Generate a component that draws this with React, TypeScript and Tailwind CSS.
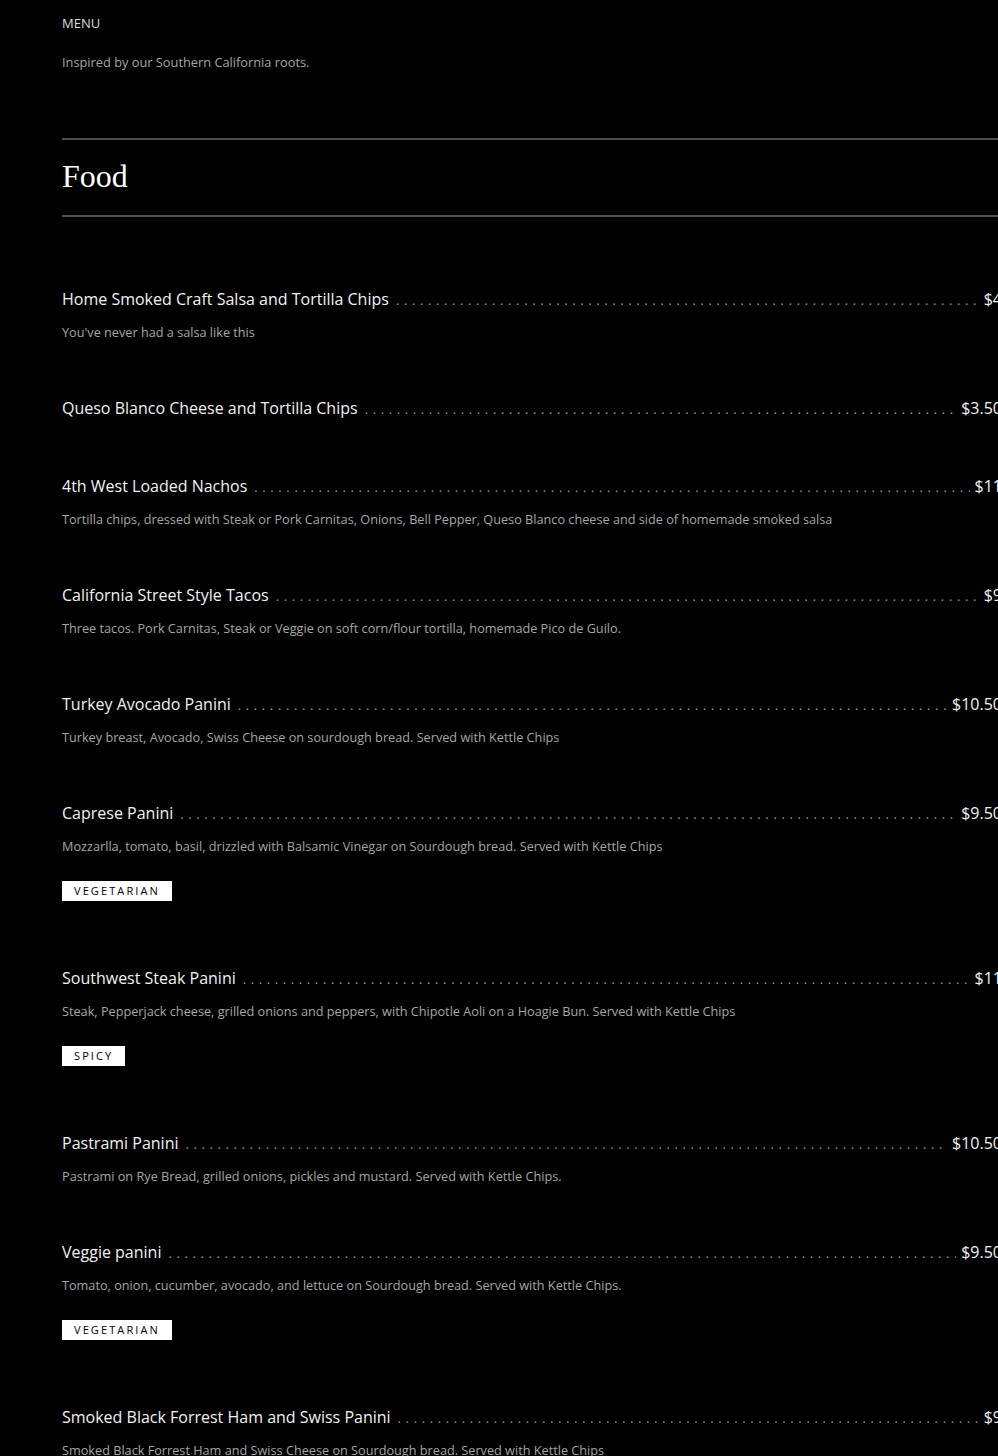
import React from "react";

type Item = {
  name: string;
  price: string;
  desc?: string;
  tag?: string;
};

const items: Item[] = [
  { name: "Home Smoked Craft Salsa and Tortilla Chips", price: "$4", desc: "You've never had a salsa like this" },
  { name: "Queso Blanco Cheese and Tortilla Chips", price: "$3.50" },
  {
    name: "4th West Loaded Nachos",
    price: "$11",
    desc: "Tortilla chips, dressed with Steak or Pork Carnitas, Onions, Bell Pepper, Queso Blanco cheese and side of homemade smoked salsa",
  },
  {
    name: "California Street Style Tacos",
    price: "$9",
    desc: "Three tacos. Pork Carnitas, Steak or Veggie on soft corn/flour tortilla, homemade Pico de Guilo.",
  },
  {
    name: "Turkey Avocado Panini",
    price: "$10.50",
    desc: "Turkey breast, Avocado, Swiss Cheese on sourdough bread. Served with Kettle Chips",
  },
  {
    name: "Caprese Panini",
    price: "$9.50",
    desc: "Mozzarlla, tomato, basil, drizzled with Balsamic Vinegar on Sourdough bread. Served with Kettle Chips",
    tag: "Vegetarian",
  },
  {
    name: "Southwest Steak Panini",
    price: "$11",
    desc: "Steak, Pepperjack cheese, grilled onions and peppers, with Chipotle Aoli on a Hoagie Bun. Served with Kettle Chips",
    tag: "Spicy",
  },
  {
    name: "Pastrami Panini",
    price: "$10.50",
    desc: "Pastrami on Rye Bread, grilled onions, pickles and mustard. Served with Kettle Chips.",
  },
  {
    name: "Veggie panini",
    price: "$9.50",
    desc: "Tomato, onion, cucumber, avocado, and lettuce on Sourdough bread. Served with Kettle Chips.",
    tag: "Vegetarian",
  },
  {
    name: "Smoked Black Forrest Ham and Swiss Panini",
    price: "$9",
    desc: "Smoked Black Forrest Ham and Swiss Cheese on Sourdough bread. Served with Kettle Chips",
  },
];

const dots = ".".repeat(160);

const MenuItem = ({ item }: { item: Item }) => {
  return (
    <div className={item.tag ? "mb-[65px]" : "mb-[54px]"}>
      <div className="flex h-6 items-baseline text-[16px] leading-6 text-[#f2f2f2]">
        <span className="whitespace-nowrap pr-[7px]">{item.name}</span>
        <span className="min-w-0 flex-1 overflow-hidden whitespace-nowrap text-[13px] tracking-[4.6px] text-[#9a9a9a]">
          {dots}
        </span>
        <span className="whitespace-nowrap pl-[5px]">{item.price}</span>
      </div>
      {item.desc && (
        <p className="mt-[11px] text-[12.7px] leading-5 text-[#a6a6a6]">{item.desc}</p>
      )}
      {item.tag && (
        <div className="mt-[25px] inline-flex h-5 items-center bg-white px-3 text-[11px] uppercase tracking-[2.1px] text-black">
          {item.tag}
        </div>
      )}
    </div>
  );
};

export default function App() {
  return (
    <div className="min-h-screen w-full overflow-hidden bg-black font-['Open_Sans',sans-serif]">
      <div className="ml-[62px] w-[940px] pt-[13px]">
        <p className="text-[13px] leading-5 text-[#dcdcdc]">MENU</p>
        <p className="mt-[19px] text-[12.8px] leading-5 text-[#a6a6a6]">
          Inspired by our Southern California roots.
        </p>
        <div className="mt-[66px] border-t-2 border-[#4f4f4f]" />
        <h2 className="pb-[17px] pt-[14px] font-['Liberation_Serif',serif] text-[32px] leading-[44px] text-white">
          Food
        </h2>
        <div className="border-t-2 border-[#4f4f4f]" />
        <div className="mt-[70px]">
          {items.map((item) => (
            <MenuItem key={item.name} item={item} />
          ))}
        </div>
      </div>
    </div>
  );
}
